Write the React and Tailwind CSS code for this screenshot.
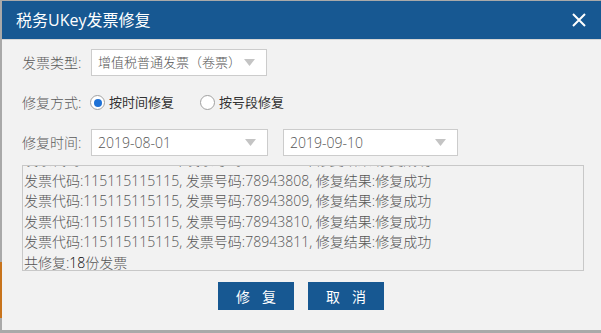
import React from "react";

const font = { fontFamily: '"Open Sans", "Noto Sans CJK SC", sans-serif' };

function Arrow() {
  return (
    <svg width="11" height="7" viewBox="0 0 11 7" className="shrink-0">
      <path d="M0 0 L11 0 L5.5 7 Z" fill="#c4c4c4" />
    </svg>
  );
}

function Box({ width, text, size }) {
  return (
    <div className={`flex items-center justify-between h-[27px] bg-white border border-[#cccccc] pl-[6px] pr-[11px] ${width}`}>
      <span className={`${size} text-[#555555] leading-none`}>{text}</span>
      <Arrow />
    </div>
  );
}

function Radio({ checked, label }) {
  return (
    <div className="flex items-center gap-[4px]">
      <div className="w-[15px] h-[15px] rounded-full border border-[#a0a0a0] bg-white flex items-center justify-center">
        {checked && <div className="w-[8px] h-[8px] rounded-full bg-[#1f72d6]" />}
      </div>
      <span className="text-[13px] text-[#333333] leading-none font-normal">{label}</span>
    </div>
  );
}

const lines = ["78943807", "78943808", "78943809", "78943810", "78943811"];

export default function App() {
  return (
    <div className="w-[601px] h-[333px] bg-[#a9a9a9] flex overflow-hidden font-light" style={font}>
      <div className="w-[2px] flex flex-col shrink-0">
        <div className="h-[262px]" />
        <div className="h-[56px] bg-[#c8741c]" />
      </div>
      <div className="flex-1 mt-[1px] h-[329px] bg-[#f2f2f2] flex flex-col">
        <div className="h-[38px] bg-[#175892] flex items-center justify-between pl-[14px] pr-[15px]">
          <span className="text-white text-[16px] leading-none font-normal">税务UKey发票修复</span>
          <svg width="14" height="14" viewBox="0 0 14 14">
            <path d="M1 1 L13 13 M13 1 L1 13" stroke="white" strokeWidth="2" />
          </svg>
        </div>
        <div className="h-[1px] bg-[#d6d6d6]" />
        <div className="flex flex-col pl-[20px] pr-[15px] pt-[9px]">
          <div className="flex flex-col gap-[13px]">
            <div className="flex items-center h-[27px]">
              <span className="w-[69px] text-[14px] text-[#5a5a5a]">发票类型:</span>
              <Box width="w-[176px]" size="text-[13px]" text="增值税普通发票（卷票）" />
            </div>
            <div className="flex items-center h-[27px]">
              <span className="w-[68px] text-[14px] text-[#5a5a5a]">修复方式:</span>
              <Radio checked label="按时间修复" />
              <div className="w-[26px]" />
              <Radio label="按号段修复" />
            </div>
            <div className="flex items-center h-[27px]">
              <span className="w-[69px] text-[14px] text-[#5a5a5a]">修复时间:</span>
              <Box width="w-[177px]" size="text-[14px]" text="2019-08-01" />
              <div className="w-[15px]" />
              <Box width="w-[175px]" size="text-[14px]" text="2019-09-10" />
            </div>
          </div>
          <div className="mt-[9px] h-[106px] w-[562px] border border-[#c8c8c8] overflow-hidden">
            <div className="-mt-[16px] pl-[1px] text-[14px] leading-[20.5px] text-[#555555]">
              {lines.map((n) => (
                <div key={n} className="whitespace-nowrap">发票代码:115115115115, 发票号码:{n}, 修复结果:修复成功</div>
              ))}
              <div>共修复:<span className="text-black">18</span>份发票</div>
            </div>
          </div>
          <div className="mt-[11px] flex justify-center gap-[14px] pr-[6px]">
            <button className="w-[76px] h-[28px] bg-[#175892] text-white text-[14px] font-normal flex items-center justify-center gap-[12px]"><span>修</span><span>复</span></button>
            <button className="w-[76px] h-[28px] bg-[#175892] text-white text-[14px] font-normal flex items-center justify-center gap-[12px]"><span>取</span><span>消</span></button>
          </div>
        </div>
      </div>
    </div>
  );
}
